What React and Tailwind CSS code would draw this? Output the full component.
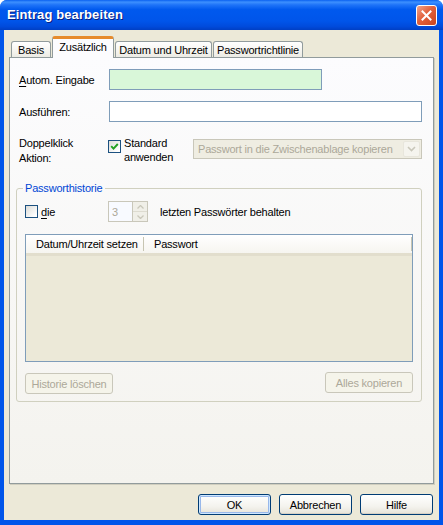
import React from "react";

const font = "font-['Liberation_Sans',Tahoma,sans-serif]";

const Checkbox = ({ checked }) => (
  <span className="flex h-[13px] w-[13px] shrink-0 items-center justify-center border border-[#1C5180] bg-[linear-gradient(135deg,#DCDCD7,#FFFFFF_85%)]">
    {checked && (
      <svg width="9" height="9" viewBox="0 0 9 9">
        <path d="M1.2 4.2 L3.5 6.6 L7.8 2" stroke="#21A121" strokeWidth="1.9" fill="none" />
      </svg>
    )}
  </span>
);

const Button = ({ children, className, primary, disabled }) => {
  if (disabled) {
    return (
      <div className={`flex items-center justify-center rounded-[3px] border border-[#C9C7BA] bg-[#F5F4EA] text-[#ACA899] ${className}`}>
        {children}
      </div>
    );
  }
  return (
    <div
      className={`flex items-center justify-center rounded-[3px] border border-[#003C74] bg-[linear-gradient(to_bottom,#FFFFFF,#F4F3EE_60%,#E6E3D8)] ${
        primary
          ? "shadow-[inset_0_0_0_1px_#CEE7FF,inset_0_0_0_2px_#98B8EA]"
          : "shadow-[inset_0_-1px_0_#D6D0C5]"
      } ${className}`}
    >
      {children}
    </div>
  );
};

const Tab = ({ label, active, className }) =>
  active ? (
    <div
      className={`relative z-10 -mb-px flex h-[22px] items-start justify-center rounded-t-[3px] border-x border-t-[3px] border-x-[#919B9C] border-t-[#E68B2C] bg-[#FCFCFE] pt-[1px] ${className}`}
    >
      {label}
    </div>
  ) : (
    <div
      className={`flex h-[16px] items-center justify-center rounded-t-[3px] border-x border-t border-[#919B9C] bg-[linear-gradient(to_bottom,#FFFFFF,#F3F2EC_70%,#ECEBE4)] pt-[1px] ${className}`}
    >
      {label}
    </div>
  );

export default function App() {
  return (
    <div className={`${font} flex h-[525px] w-[443px] flex-col overflow-hidden rounded-t-[7px] bg-[#0055EA] text-[11px] leading-[14px] tracking-[-0.2px] text-black`}>
      {/* title bar */}
      <div className="flex h-[30px] shrink-0 items-center justify-between bg-[linear-gradient(180deg,#0A61F0_0%,#3D90FE_7%,#1F74F8_16%,#0059EE_32%,#0055EA_70%,#004BDC_88%,#003FC4_100%)] pl-[7px] pr-[6px]">
        <span className="text-[13px] font-bold tracking-[0.1px] text-white [text-shadow:1px_1px_0_#0A1E80]">
          Eintrag bearbeiten
        </span>
        <div className="flex h-[21px] w-[21px] items-center justify-center rounded-[3px] border border-white bg-[linear-gradient(135deg,#F2A48C,#E2613C_45%,#C9441F)]">
          <svg width="11" height="11" viewBox="0 0 11 11">
            <path d="M1.5 1.5 L9.5 9.5 M9.5 1.5 L1.5 9.5" stroke="white" strokeWidth="2" strokeLinecap="square" />
          </svg>
        </div>
      </div>

      {/* client area */}
      <div className="mx-[4px] mb-[5px] flex flex-1 flex-col bg-[#ECE9D8] px-[5px] pt-[6px]">
        <div className="flex items-end pl-[2px]">
          <Tab label="Basis" className="w-[40px]" />
          <Tab label="Zusätzlich" active className="ml-px w-[62px]" />
          <Tab label="Datum und Uhrzeit" className="ml-px w-[97px]" />
          <Tab label="Passwortrichtlinie" className="ml-px w-[90px]" />
        </div>

        <div className="flex h-[427px] flex-col border border-[#919B9C] bg-[linear-gradient(to_bottom,#FCFCFE,#F4F3EE)] pl-[6px] pr-[11px] pt-[11px] shadow-[1px_1px_0_#D0CEBF]">
          <div className="flex h-[21px] items-center">
            <span className="w-[93px] pl-[3px]">
              <span className="underline underline-offset-2">A</span>utom. Eingabe
            </span>
            <div className="h-[21px] w-[213px] border border-[#7F9DB9] bg-[#D9F7D9]" />
          </div>

          <div className="mt-[11px] flex h-[21px] items-center">
            <span className="w-[93px] pl-[3px]">Ausführen:</span>
            <div className="h-[21px] flex-1 border border-[#7F9DB9] bg-white" />
          </div>

          <div className="mt-[14px] flex items-start">
            <span className="w-[92px] pl-[3px] leading-[15px]">
              Doppelklick
              <br />
              Aktion:
            </span>
            <div className="mt-[4px] flex w-[85px] shrink-0 items-start">
              <Checkbox checked />
              <span className="ml-[3px] mt-[-4px] leading-[14px]">
                Standard
                <br />
                anwenden
              </span>
            </div>
            <div className="mt-[3px] flex h-[20px] min-w-0 flex-1 items-center border border-[#C9C7BA] bg-[#EFEDE2] pl-[4px] text-[#ACA899]">
              <span className="flex-1 overflow-hidden whitespace-nowrap">Passwort in die Zwischenablage kopieren</span>
              <div className="mr-px flex h-[16px] w-[17px] shrink-0 items-center justify-center rounded-[2px] border border-[#E8E6DC] bg-[#F5F4EE]">
                <svg width="9" height="6" viewBox="0 0 9 6">
                  <path d="M1 1 L4.5 4.5 L8 1" stroke="#C9C7BA" strokeWidth="1.6" fill="none" />
                </svg>
              </div>
            </div>
          </div>

          <fieldset className="mt-[15px] rounded-[3px] border border-[#D0D0BF]">
            <legend className="ml-[6px] px-[2px] text-[#0046D5]">Passworthistorie</legend>
            <div className="flex flex-col px-[8px] pb-[7px] pt-[6px]">
              <div className="flex h-[21px] items-center">
                <div className="flex w-[83px] items-center">
                  <Checkbox />
                  <span className="ml-[3px]">
                    <span className="underline underline-offset-2">d</span>ie
                  </span>
                </div>
                <div className="flex h-[21px] w-[25px] items-center border border-[#C9C7BA] bg-[#F8FAFF] pl-[3px] text-[#ACA899]">
                  3
                </div>
                <div className="flex h-[21px] w-[15px] flex-col border-y border-r border-[#C9C7BA] bg-[#F0EFE8]">
                  <div className="flex flex-1 items-center justify-center border-b border-[#DDDBD0]">
                    <svg width="7" height="4" viewBox="0 0 7 4">
                      <path d="M0.5 3.5 L3.5 0.5 L6.5 3.5" stroke="#C9C7BA" strokeWidth="1.3" fill="none" />
                    </svg>
                  </div>
                  <div className="flex flex-1 items-center justify-center">
                    <svg width="7" height="4" viewBox="0 0 7 4">
                      <path d="M0.5 0.5 L3.5 3.5 L6.5 0.5" stroke="#C9C7BA" strokeWidth="1.3" fill="none" />
                    </svg>
                  </div>
                </div>
                <span className="ml-[12px]">letzten Passwörter behalten</span>
              </div>

              <div className="mt-[12px] flex h-[128px] flex-col border border-[#7F9DB9] bg-[#ECE9D8]">
                <div className="flex h-[21px] shrink-0 items-center border-b-[3px] border-[#E2DECD] bg-[linear-gradient(to_bottom,#FFFFFF,#F6F5F0)]">
                  <span className="w-[118px] border-r border-[#C7C5B2] pl-[10px]">Datum/Uhrzeit setzen</span>
                  <span className="flex-1 border-r border-[#C7C5B2] pl-[10px]">Passwort</span>
                </div>
              </div>

              <div className="mt-[10px] flex items-start justify-between">
                <Button disabled className="mt-px h-[21px] w-[88px]">Historie löschen</Button>
                <Button disabled className="h-[21px] w-[88px]">Alles kopieren</Button>
              </div>
            </div>
          </fieldset>
        </div>

        <div className="mt-[10px] flex justify-end gap-[8px] pr-[1px]">
          <Button primary className="h-[21px] w-[73px]">OK</Button>
          <Button className="h-[21px] w-[73px]">Abbrechen</Button>
          <Button className="h-[21px] w-[73px]">Hilfe</Button>
        </div>
      </div>
    </div>
  );
}
